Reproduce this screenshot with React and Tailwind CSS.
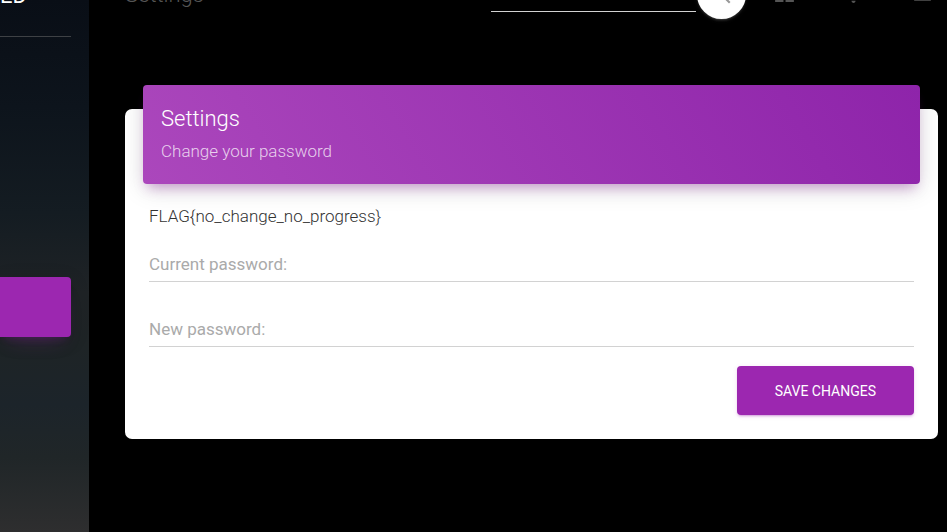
import { MdDashboard, MdNotifications, MdPerson, MdSearch } from "react-icons/md";

const navLinks = [
  { label: "Dashboard", Icon: MdDashboard },
  { label: "Notifications", Icon: MdNotifications },
  { label: "Profile", Icon: MdPerson },
];

function Sidebar() {
  return (
    <aside className="w-[89px] shrink-0 overflow-hidden bg-[linear-gradient(180deg,#090e16_0%,#0d141c_20%,#141c22_40%,#1f2326_55%,#1e2426_65%,#1c242a_76%,#202628_86%,#2e2e2f_100%)] pr-[18px]">
      <div className="-mt-10 flex h-[77px] justify-end border-b border-[#3e4145] pt-5 pr-11">
        <a href="#home" className="text-[22px] leading-8 text-white">
          LED
        </a>
      </div>
      <nav className="pt-60">
        <a
          href="#settings"
          aria-label="Settings"
          className="block h-[60px] rounded-r-[4px] bg-[#9c27b0] shadow-[0_12px_20px_-10px_rgba(156,39,176,0.28),0_4px_20px_0_rgba(0,0,0,0.12),0_7px_8px_-5px_rgba(156,39,176,0.2)]"
        />
      </nav>
    </aside>
  );
}

function TopBar() {
  return (
    <header className="-mt-10 flex h-[69px] items-center">
      <a href="#settings" className="text-[22px] leading-8 font-light text-[#555555]">
        Settings
      </a>
      <form className="mr-1 ml-auto flex items-center gap-px">
        <input
          type="search"
          aria-label="Search"
          className="h-[34px] w-[205px] border-b border-[#d2d2d2] bg-transparent text-[17px] text-white outline-none"
        />
        <button
          type="button"
          aria-label="Search"
          className="flex size-[49px] items-center justify-center rounded-full bg-white text-[#999999] shadow-[0_2px_2px_0_rgba(153,153,153,0.14),0_3px_1px_-2px_rgba(153,153,153,0.2),0_1px_5px_0_rgba(153,153,153,0.12)]"
        >
          <MdSearch size={24} />
        </button>
      </form>
      <nav className="-mr-[19px] flex pb-1">
        {navLinks.map(({ label, Icon }) => (
          <a
            key={label}
            href={"#" + label.toLowerCase()}
            aria-label={label}
            className="flex w-[69px] justify-center text-[#555555]"
          >
            <Icon size={25} />
          </a>
        ))}
      </nav>
    </header>
  );
}

function PasswordField({ id, label }) {
  return (
    <div className="relative">
      <label htmlFor={id} className="absolute top-2 left-0 text-[17px] leading-6 text-[#aaaaaa]">
        {label}
      </label>
      <input
        id={id}
        type="password"
        className="block h-[38px] w-full border-b border-[#d2d2d2] bg-transparent text-[17px] outline-none"
      />
    </div>
  );
}

function SettingsCard() {
  return (
    <section className="mt-20 flex flex-col rounded-[7px] bg-white pb-6">
      <div className="mx-[18px] -mt-6 rounded-[4px] bg-[linear-gradient(60deg,#ab47bc,#8e24aa)] px-[18px] pt-[18px] pb-[21px] shadow-[0_5px_24px_0_rgba(0,0,0,0.14),0_8px_12px_-5px_rgba(156,39,176,0.4)]">
        <h4 className="text-[22px] leading-8 font-light text-white">Settings</h4>
        <p className="pt-1 text-[17px] leading-6 font-light text-white/75">Change your password</p>
      </div>
      <form className="px-6 pt-5">
        <p className="text-[17px] leading-6 font-light text-[#333333]">
          FLAG&#123;no_change_no_progress&#125;
        </p>
        <div className="flex flex-col gap-[27px] pt-4">
          <PasswordField id="current-password" label="Current password:" />
          <PasswordField id="new-password" label="New password:" />
        </div>
        <div className="flex justify-end pt-[19px]">
          <button
            type="button"
            className="h-[49px] rounded-[4px] bg-[#9c27b0] px-[38px] text-[14px] leading-5 text-white uppercase shadow-[0_2px_2px_0_rgba(156,39,176,0.14),0_3px_1px_-2px_rgba(156,39,176,0.2),0_1px_5px_0_rgba(156,39,176,0.12)]"
          >
            Save changes
          </button>
        </div>
      </form>
    </section>
  );
}

export default function App() {
  return (
    <div className="flex h-screen overflow-hidden bg-black font-[Roboto,sans-serif]">
      <Sidebar />
      <main className="min-w-0 flex-1 pr-[9px] pl-9">
        <TopBar />
        <SettingsCard />
      </main>
    </div>
  );
}
